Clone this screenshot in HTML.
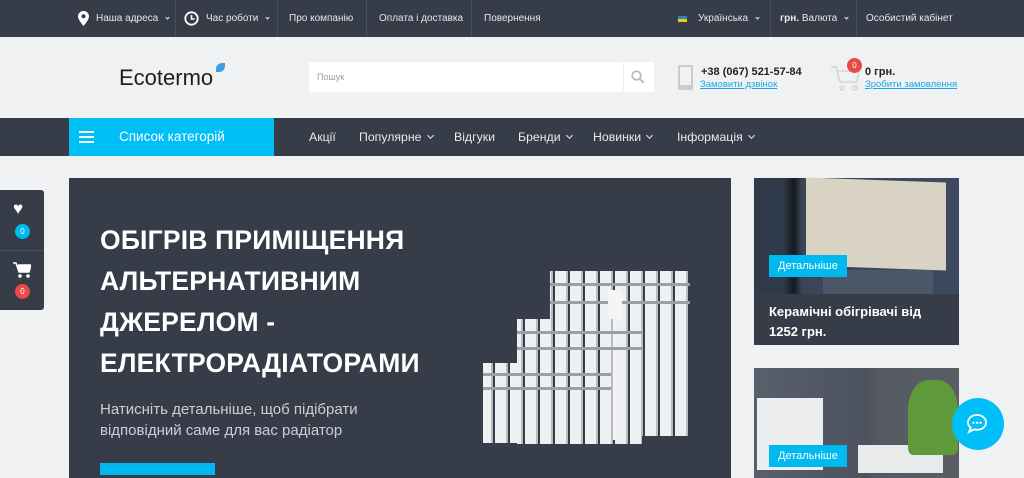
<!DOCTYPE html>
<html><head><meta charset="utf-8"><style>
*{margin:0;padding:0;box-sizing:border-box}
body{width:1024px;height:473px;overflow:hidden;background:#f0f1f3;font-family:"Liberation Sans","DejaVu Sans",sans-serif;position:relative}
.a{position:absolute}
.top{left:0;top:0;width:1024px;height:37px;background:#363c48;color:#e6e8ec;font-size:10px}
.top span{position:absolute;top:13px;white-space:nowrap}
.sep{position:absolute;top:0;width:1px;height:37px;background:#4a505b}
.hdr{left:0;top:37px;width:1024px;height:81px;background:#f0f1f3}
.nav{left:0;top:118px;width:1024px;height:38px;background:#363c48;color:#e8eaee;font-size:12.3px}
.nav span{position:absolute;top:12px;white-space:nowrap}
.chev{display:inline-block;width:5px;height:5px;border-right:1.5px solid currentColor;border-bottom:1.5px solid currentColor;transform:rotate(45deg);margin-left:6px;position:relative;top:-3px}
.top .chev{width:3px;height:3px;border-width:1px;margin-left:5px;top:-2px}
.banner{left:69px;top:178px;width:662px;height:300px;background:#363c48}
h1{position:absolute;left:100px;top:220px;color:#fff;font-size:26.5px;line-height:41px;font-weight:bold;letter-spacing:0.2px}
.btn{background:#00b9ef;color:#fff;font-size:11px;padding:5px 9px}
</style></head><body>
<div class="a top">
<svg class="a" style="left:78px;top:11px" width="11" height="15" viewBox="0 0 11 15"><path d="M5.5 0C2.5 0 0 2.4 0 5.4 0 9 5.5 15 5.5 15S11 9 11 5.4C11 2.4 8.5 0 5.5 0z" fill="#fff"/><circle cx="5.5" cy="5.3" r="2" fill="#363c48"/></svg>
<span style="left:96px">Наша адреса <i class="chev"></i></span>
<div class="sep" style="left:175px"></div>
<svg class="a" style="left:184px;top:11px" width="15" height="15" viewBox="0 0 15 15"><circle cx="7.5" cy="7.5" r="6.2" fill="none" stroke="#fff" stroke-width="1.8"/><path d="M7.5 4v4h3" fill="none" stroke="#fff" stroke-width="1.6"/></svg>
<span style="left:206px">Час роботи <i class="chev"></i></span>
<div class="sep" style="left:277px"></div>
<span style="left:289px">Про компанію</span>
<div class="sep" style="left:366px"></div>
<span style="left:379px">Оплата і доставка</span>
<div class="sep" style="left:471px"></div>
<span style="left:484px">Повернення</span>
<div class="a" style="left:678px;top:16px;width:9px;height:3px;background:#2a7fd4"></div><div class="a" style="left:678px;top:19px;width:9px;height:3px;background:#f1d100"></div>
<span style="left:698px">Українська <i class="chev"></i></span>
<div class="sep" style="left:770px"></div>
<span style="left:780px"><b>грн.</b> Валюта <i class="chev"></i></span>
<div class="sep" style="left:856px"></div>
<span style="left:866px">Особистий кабінет</span>
</div>
<div class="a hdr">
<div class="a" style="left:119px;top:28px;font-size:22px;color:#1e1f22">Ecotermo</div>
<div class="a" style="left:216px;top:26px;width:9px;height:9px;background:#3a9ee0;border-radius:6px 0 6px 0"></div>
<div class="a" style="left:309px;top:25px;width:345px;height:30px;background:#fff"></div>
<div class="a" style="left:317px;top:35px;font-size:9px;color:#999">Пошук</div>
<div class="a" style="left:623px;top:25px;width:1px;height:30px;background:#f0f0f0"></div>
<svg class="a" style="left:631px;top:33px" width="14" height="14" viewBox="0 0 14 14"><circle cx="5.5" cy="5.5" r="4.3" fill="none" stroke="#bbb" stroke-width="1.8"/><path d="M8.7 8.7l4 4" stroke="#bbb" stroke-width="2"/></svg>
<div class="a" style="left:678px;top:28px;width:15px;height:25px;border:2px solid #c9cbcf;border-radius:2px;border-bottom-width:5px"></div>
<div class="a" style="left:701px;top:29px;font-size:11px;font-weight:bold;color:#222">+38 (067) 521-57-84</div>
<div class="a" style="left:700px;top:42px;font-size:9.5px;color:#19a7e8;text-decoration:underline">Замовити дзвінок</div>
<svg class="a" style="left:830px;top:27px" width="30" height="28" viewBox="0 0 30 28"><path d="M1 3h5l4 15h17l2-11H8" fill="none" stroke="#d3d5d8" stroke-width="1.6"/><circle cx="12" cy="24" r="2" fill="none" stroke="#d3d5d8" stroke-width="1.5"/><circle cx="25" cy="24" r="2" fill="none" stroke="#d3d5d8" stroke-width="1.5"/></svg>
<div class="a" style="left:847px;top:21px;width:15px;height:15px;border-radius:50%;background:#e84a4a;color:#fff;font-size:8px;text-align:center;line-height:15px">0</div>
<div class="a" style="left:865px;top:29px;font-size:11px;font-weight:bold;color:#222">0 грн.</div>
<div class="a" style="left:865px;top:42px;font-size:9.5px;color:#19a7e8;text-decoration:underline">Зробити замовлення</div>
</div>
<div class="a nav">
<div class="a" style="left:69px;top:0;width:205px;height:38px;background:#00bff6"></div>
<div class="a" style="left:79px;top:13px;width:15px;height:2px;background:#fff;box-shadow:0 5px 0 #fff,0 10px 0 #fff"></div>
<span style="left:119px;font-size:13.5px;top:11px;color:#fff">Список категорій</span>
<span style="left:309px">Акції</span>
<span style="left:359px">Популярне<i class="chev"></i></span>
<span style="left:454px">Відгуки</span>
<span style="left:518px">Бренди<i class="chev"></i></span>
<span style="left:593px">Новинки<i class="chev"></i></span>
<span style="left:677px">Інформація<i class="chev"></i></span>
</div>
<div class="a" style="left:0;top:190px;width:44px;height:120px;background:#363c48;border-radius:0 3px 3px 0"></div>
<div class="a" style="left:0;top:250px;width:44px;height:1px;background:#4a505b"></div>
<div class="a" style="left:13px;top:199px;font-size:17px;color:#fff">&#9829;</div>
<div class="a" style="left:15px;top:224px;width:15px;height:15px;border-radius:50%;background:#00b9ef;color:#fff;font-size:8px;text-align:center;line-height:15px">0</div>
<svg class="a" style="left:13px;top:262px" width="18" height="16" viewBox="0 0 18 16"><path d="M0 1h3l3 9h10l2-7H5" fill="#fff" stroke="#fff" stroke-width="1.5"/><circle cx="7" cy="14" r="1.8" fill="#fff"/><circle cx="15" cy="14" r="1.8" fill="#fff"/></svg>
<div class="a" style="left:15px;top:284px;width:15px;height:15px;border-radius:50%;background:#e84a4a;color:#fff;font-size:8px;text-align:center;line-height:15px">0</div>
<div class="a banner"></div>
<h1>ОБІГРІВ ПРИМІЩЕННЯ<br>АЛЬТЕРНАТИВНИМ<br>ДЖЕРЕЛОМ -<br>ЕЛЕКТРОРАДІАТОРАМИ</h1>
<div class="a" style="left:100px;top:399px;font-size:15px;line-height:21px;color:#ccd0d6">Натисніть детальніше, щоб підібрати<br>відповідний саме для вас радіатор</div>
<div class="a" style="left:100px;top:463px;width:115px;height:12px;background:#00b9ef"></div>
<svg class="a" style="left:480px;top:265px" width="220" height="180" viewBox="0 0 220 180">
<defs><pattern id="p" width="15" height="200" patternUnits="userSpaceOnUse"><rect x="0" y="0" width="13" height="200" fill="#eef0f2"/><rect x="11" y="0" width="2" height="200" fill="#b8bcc2"/></pattern></defs>
<rect x="70" y="6" width="140" height="165" fill="url(#p)"/><rect x="70" y="6" width="140" height="50" fill="url(#p)" opacity=".85"/><rect x="70" y="18" width="140" height="3" fill="#9aa0a8"/><rect x="70" y="36" width="140" height="3" fill="#9aa0a8"/><rect x="128" y="25" width="14" height="150" fill="#f4f5f6"/>
<rect x="37" y="54" width="125" height="125" fill="url(#p)"/><rect x="37" y="66" width="125" height="3" fill="#9aa0a8"/><rect x="37" y="82" width="125" height="3" fill="#9aa0a8"/>
<rect x="3" y="98" width="128" height="80" fill="url(#p)"/><rect x="3" y="108" width="128" height="3" fill="#9aa0a8"/><rect x="3" y="122" width="128" height="3" fill="#9aa0a8"/>
</svg>
<div class="a" style="left:754px;top:178px;width:205px;height:167px;background:linear-gradient(90deg,#2f3a4a 0,#2f3a4a 30px,#16191f 40px,#3a4656 48px,#3d4960 100%)"></div>
<div class="a" style="left:806px;top:180px;width:140px;height:88px;background:#d9d3c3;transform:skewY(2deg)"></div>
<div class="a" style="left:754px;top:294px;width:205px;height:51px;background:#363c48"></div>
<div class="a" style="left:823px;top:270px;width:110px;height:24px;background:#4b5666"></div>
<div class="a btn" style="left:769px;top:255px">Детальніше</div>
<div class="a" style="left:769px;top:302px;font-size:13px;line-height:20px;font-weight:bold;color:#fff">Керамічні обігрівачі від<br>1252 грн.</div>
<div class="a" style="left:754px;top:368px;width:205px;height:110px;background:linear-gradient(90deg,#59606d,#4c525e 55%,#555a62 60%,#5a5e64)"></div>
<div class="a" style="left:757px;top:398px;width:66px;height:72px;background:#eceef0"></div>
<div class="a" style="left:858px;top:445px;width:85px;height:28px;background:#e8eaec"></div>
<div class="a" style="left:908px;top:380px;width:50px;height:75px;background:#5f9a3a;border-radius:40% 40% 10% 10%"></div>
<div class="a btn" style="left:769px;top:445px">Детальніше</div>
<div class="a" style="left:952px;top:398px;width:52px;height:52px;border-radius:50%;background:#00bff6"></div>
<svg class="a" style="left:964px;top:412px" width="26" height="24" viewBox="0 0 26 24"><path d="M13 3C7.5 3 4 6.5 4 10.5c0 2.2 1 4 2.8 5.3L5 20l5-2.6c1 .3 2 .4 3 .4 5.5 0 9-3.4 9-7.3S18.5 3 13 3z" fill="none" stroke="#fff" stroke-width="1.8"/><circle cx="9.5" cy="10.8" r="1.2" fill="#fff"/><circle cx="13" cy="10.8" r="1.2" fill="#fff"/><circle cx="16.5" cy="10.8" r="1.2" fill="#fff"/></svg>
</body></html>
